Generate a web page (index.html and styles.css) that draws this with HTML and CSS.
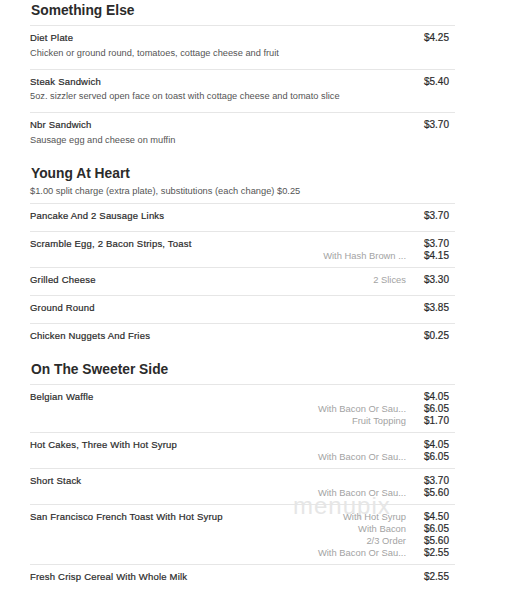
FILE: index.html
```html
<!DOCTYPE html>
<html lang="en">
<head>
<meta charset="utf-8">
<title>Menu</title>
<link rel="stylesheet" href="styles.css">
</head>
<body>
<div class="menu">

  <section class="section">
    <div class="section-head">
      <h2 class="section-title">Something Else</h2>
    </div>
    <div class="item">
      <div class="item-main">
        <div class="name">Diet Plate</div>
        <div class="desc">Chicken or ground round, tomatoes, cottage cheese and fruit</div>
      </div>
      <div class="prices">
        <span class="label"></span><span class="price">$4.25</span>
      </div>
    </div>
    <div class="item">
      <div class="item-main">
        <div class="name">Steak Sandwich</div>
        <div class="desc">5oz. sizzler served open face on toast with cottage cheese and tomato slice</div>
      </div>
      <div class="prices">
        <span class="label"></span><span class="price">$5.40</span>
      </div>
    </div>
    <div class="item">
      <div class="item-main">
        <div class="name">Nbr Sandwich</div>
        <div class="desc">Sausage egg and cheese on muffin</div>
      </div>
      <div class="prices">
        <span class="label"></span><span class="price">$3.70</span>
      </div>
    </div>
  </section>

  <section class="section">
    <div class="section-head">
      <h2 class="section-title">Young At Heart</h2>
      <div class="section-note">$1.00 split charge (extra plate), substitutions (each change) $0.25</div>
    </div>
    <div class="item">
      <div class="item-main"><div class="name">Pancake And 2 Sausage Links</div></div>
      <div class="prices">
        <span class="label"></span><span class="price">$3.70</span>
      </div>
    </div>
    <div class="item">
      <div class="item-main"><div class="name">Scramble Egg, 2 Bacon Strips, Toast</div></div>
      <div class="prices">
        <span class="label"></span><span class="price">$3.70</span>
        <span class="label">With Hash Brown ...</span><span class="price">$4.15</span>
      </div>
    </div>
    <div class="item">
      <div class="item-main"><div class="name">Grilled Cheese</div></div>
      <div class="prices">
        <span class="label">2 Slices</span><span class="price">$3.30</span>
      </div>
    </div>
    <div class="item">
      <div class="item-main"><div class="name">Ground Round</div></div>
      <div class="prices">
        <span class="label"></span><span class="price">$3.85</span>
      </div>
    </div>
    <div class="item">
      <div class="item-main"><div class="name">Chicken Nuggets And Fries</div></div>
      <div class="prices">
        <span class="label"></span><span class="price">$0.25</span>
      </div>
    </div>
  </section>

  <section class="section">
    <div class="section-head">
      <h2 class="section-title">On The Sweeter Side</h2>
    </div>
    <div class="item">
      <div class="item-main"><div class="name">Belgian Waffle</div></div>
      <div class="prices">
        <span class="label"></span><span class="price">$4.05</span>
        <span class="label">With Bacon Or Sau...</span><span class="price">$6.05</span>
        <span class="label">Fruit Topping</span><span class="price">$1.70</span>
      </div>
    </div>
    <div class="item">
      <div class="item-main"><div class="name">Hot Cakes, Three With Hot Syrup</div></div>
      <div class="prices">
        <span class="label"></span><span class="price">$4.05</span>
        <span class="label">With Bacon Or Sau...</span><span class="price">$6.05</span>
      </div>
    </div>
    <div class="item">
      <div class="item-main"><div class="name">Short Stack</div></div>
      <div class="prices">
        <span class="label"></span><span class="price">$3.70</span>
        <span class="label">With Bacon Or Sau...</span><span class="price">$5.60</span>
      </div>
    </div>
    <div class="item">
      <div class="item-main"><div class="name">San Francisco French Toast With Hot Syrup</div></div>
      <div class="prices">
        <span class="label">With Hot Syrup</span><span class="price">$4.50</span>
        <span class="label">With Bacon</span><span class="price">$6.05</span>
        <span class="label">2/3 Order</span><span class="price">$5.60</span>
        <span class="label">With Bacon Or Sau...</span><span class="price">$2.55</span>
      </div>
      <div class="watermark">menupix</div>
    </div>
    <div class="item">
      <div class="item-main"><div class="name">Fresh Crisp Cereal With Whole Milk</div></div>
      <div class="prices">
        <span class="label"></span><span class="price">$2.55</span>
      </div>
    </div>
  </section>

</div>
</body>
</html>
```

FILE: styles.css
```css
html, body {
  margin: 0;
  padding: 0;
  background: #ffffff;
}

body {
  font-family: "Liberation Sans", Arial, sans-serif;
  color: #333333;
}

.menu {
  width: 425px;
  margin-left: 30px;
  padding-top: 2px;
}

.section {
  margin-bottom: 9.5px;
}

.section-head {
  padding-bottom: 5px;
}

.section-title {
  margin: 0;
  padding-left: 1px;
  font-size: 13.8px;
  line-height: 18px;
  font-weight: bold;
  color: #2b2b2b;
}

.section-note {
  margin-top: 2px;
  font-size: 9.3px;
  line-height: 13px;
  color: #555555;
}

.item {
  position: relative;
  display: flex;
  align-items: flex-start;
  justify-content: space-between;
  box-sizing: border-box;
  min-height: 28px;
  padding-right: 6px;
  border-top: 1px solid #e6e6e6;
}

.item-main {
  flex: 1;
  min-width: 0;
  padding: 5px 0 9px;
}

.name {
  font-size: 9.5px;
  line-height: 13px;
  letter-spacing: 0.2px;
  color: #2a2a2a;
  -webkit-text-stroke: 0.2px #2a2a2a;
}

.desc {
  margin-top: 1.5px;
  font-size: 9.25px;
  line-height: 14px;
  color: #555555;
  white-space: nowrap;
}

.prices {
  position: relative;
  z-index: 1;
  display: grid;
  grid-template-columns: auto 36px;
  column-gap: 7px;
  padding: 6px 0 5px;
  line-height: 12px;
}

.label {
  text-align: right;
  white-space: nowrap;
  font-size: 9.4px;
  color: #a3a3a3;
}

.price {
  text-align: right;
  font-size: 10px;
  color: #2a2a2a;
  -webkit-text-stroke: 0.2px #2a2a2a;
}

.watermark {
  position: absolute;
  left: 263px;
  top: -11px;
  font-size: 24px;
  line-height: 24px;
  letter-spacing: 1px;
  color: #e6e6e6;
  pointer-events: none;
}
```
